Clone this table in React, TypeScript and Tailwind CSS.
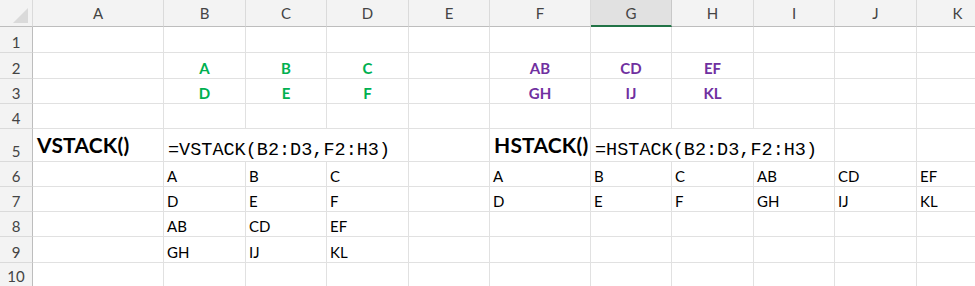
import React from 'react';

type Cell = {
  text?: string;
  span?: number;
  kind?: 'green' | 'purple' | 'title' | 'formula' | 'plain';
};

const columns = ['A', 'B', 'C', 'D', 'E', 'F', 'G', 'H', 'I', 'J', 'K'];

const g = (text: string): Cell => ({ text, kind: 'green' });
const p = (text: string): Cell => ({ text, kind: 'purple' });
const t = (text: string): Cell => ({ text, kind: 'plain' });
const e: Cell = {};

// one entry per sheet row, cells A..K (spans cover the overflowing formulas)
const rows: Cell[][] = [
  [e, e, e, e, e, e, e, e, e, e, e],
  [e, g('A'), g('B'), g('C'), e, p('AB'), p('CD'), p('EF'), e, e, e],
  [e, g('D'), g('E'), g('F'), e, p('GH'), p('IJ'), p('KL'), e, e, e],
  [e, e, e, e, e, e, e, e, e, e, e],
  [
    { text: 'VSTACK()', kind: 'title' },
    { text: '=VSTACK(B2:D3,F2:H3)', kind: 'formula', span: 3 },
    e,
    { text: 'HSTACK()', kind: 'title' },
    { text: '=HSTACK(B2:D3,F2:H3)', kind: 'formula', span: 3 },
    e,
    e,
  ],
  [e, t('A'), t('B'), t('C'), e, t('A'), t('B'), t('C'), t('AB'), t('CD'), t('EF')],
  [e, t('D'), t('E'), t('F'), e, t('D'), t('E'), t('F'), t('GH'), t('IJ'), t('KL')],
  [e, t('AB'), t('CD'), t('EF'), e, e, e, e, e, e, e],
  [e, t('GH'), t('IJ'), t('KL'), e, e, e, e, e, e, e],
  [e, e, e, e, e, e, e, e, e, e, e],
];

const spanClass: Record<number, string> = { 1: '', 3: 'col-span-3' };

function DataCell({ cell }: { cell: Cell }) {
  const base = 'flex border-r border-b border-[#e1e1e1] whitespace-nowrap overflow-visible min-w-0';
  if (cell.kind === 'green' || cell.kind === 'purple') {
    return (
      <div className={`${base} items-end justify-center pb-[1px]`}>
        <span className={`text-[15px] leading-[18px] font-bold ${cell.kind === 'green' ? 'text-[#00b050]' : 'text-[#7030a0]'}`}>
          {cell.text}
        </span>
      </div>
    );
  }
  if (cell.kind === 'title') {
    return (
      <div className={`${base} items-end pl-[4px] pb-[4px]`}>
        <span className="text-[21px] leading-[24px] font-bold text-black tracking-[0.2px]">{cell.text}</span>
      </div>
    );
  }
  if (cell.kind === 'formula') {
    return (
      <div className={`${base} ${spanClass[cell.span ?? 1]} items-end pl-[4px] pb-[1px]`}>
        <span className="font-['Liberation_Mono',monospace] text-[18.5px] leading-[18px] text-black">{cell.text}</span>
      </div>
    );
  }
  return (
    <div className={`${base} items-end px-[3px] pb-[1px]`}>
      {cell.text && <span className="text-[15px] leading-[18px] text-black">{cell.text}</span>}
    </div>
  );
}

export default function App() {
  return (
    <div className="w-[975px] h-[286px] overflow-hidden bg-white font-['Lato','Noto_Sans',sans-serif]">
      <div className="grid w-[1000px] grid-cols-[33px_131px_82px_81px_82px_81px_101px_81px_82px_81px_82px_82px] grid-rows-[27px_26px_26px_25px_25px_33px_25px_25px_25px_26px_24px]">
        {/* corner */}
        <div className="relative bg-[#f3f3f3] border-r border-b border-r-[#dadada] border-b-[#bdbdbd]">
          <svg className="absolute left-[13px] top-[8px]" width="15" height="15" viewBox="0 0 15 15">
            <polygon points="15,0 15,15 0,15" fill="#dadada" />
          </svg>
        </div>
        {columns.map((c) =>
          c === 'G' ? (
            <div
              key={c}
              className="flex items-end justify-center pb-[3px] bg-[#e1e1e1] border-r border-r-[#c8c8c8] border-b-2 border-b-[#217346] text-[15px] leading-[18px] text-[#444]"
            >
              {c}
            </div>
          ) : (
            <div
              key={c}
              className="flex items-end justify-center pb-[4px] bg-[#f3f3f3] border-r border-b border-r-[#dadada] border-b-[#bdbdbd] text-[15px] leading-[18px] text-[#444]"
            >
              {c}
            </div>
          )
        )}
        {rows.map((row, i) => (
          <React.Fragment key={i}>
            <div className="flex items-end justify-center pb-[1px] bg-[#f3f3f3] border-r border-b border-r-[#bdbdbd] border-b-[#dadada] text-[15px] leading-[18px] text-[#444]">
              {i + 1}
            </div>
            {row.map((cell, j) => (
              <DataCell key={j} cell={cell} />
            ))}
          </React.Fragment>
        ))}
      </div>
    </div>
  );
}
